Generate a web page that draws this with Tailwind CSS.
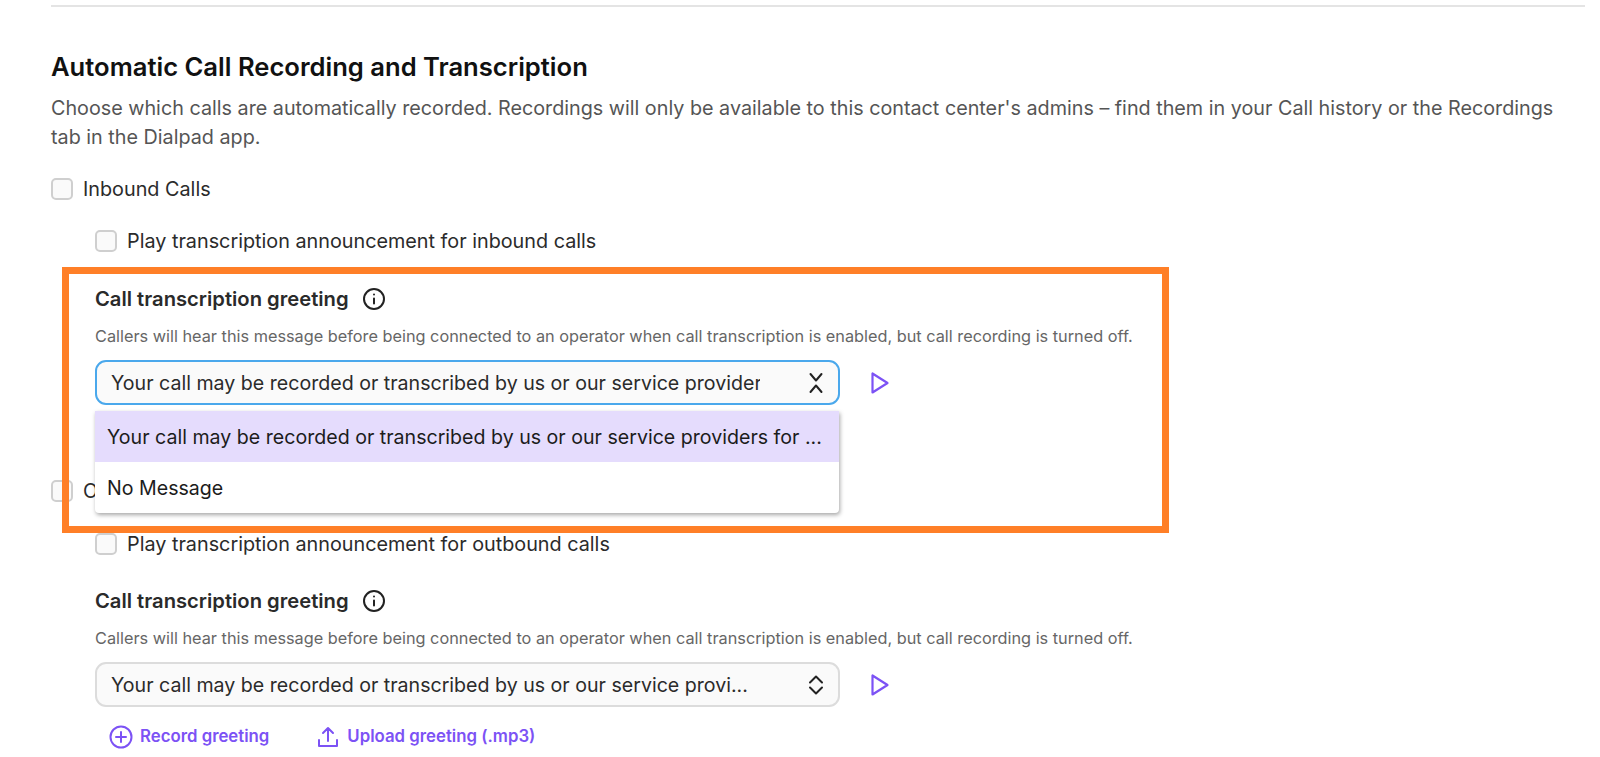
<!DOCTYPE html>
<html lang="en">
<head>
  <meta charset="UTF-8">
  <title>Automatic Call Recording and Transcription</title>
  <script src="https://cdn.jsdelivr.net/npm/@tailwindcss/browser@4"></script>
</head>
<body class="bg-white h-[757px] overflow-hidden font-['Inter',sans-serif] text-[#2b2b2b]">
  <div class="pt-[5px] pl-[51px] w-[1585px]">
    <div class="h-[2px] bg-[#e4e4e4]"></div>

    <h2 class="mt-[44px] text-[25.6px] leading-[32px] font-semibold text-[#111]">Automatic Call Recording and Transcription</h2>
    <p class="mt-[11px] text-[19.75px] leading-[29px] text-[#555] w-[1515px]">Choose which calls are automatically recorded. Recordings will only be available to this contact center's admins – find them in your Call history or the Recordings tab in the Dialpad app.</p>

    <!-- Inbound -->
    <div class="mt-[26px]">
      <label class="flex items-center gap-[10px] h-[22px] text-[19.8px]">
        <span class="w-[22px] h-[22px] rounded-[5px] border-2 border-[#cfcfcf] bg-[#fafafa]"></span>
        <span class="mt-[2px]">Inbound Calls</span>
      </label>
      <div class="ml-[44px] mt-[30px]">
        <label class="flex items-center gap-[10px] h-[22px] text-[19.8px]">
          <span class="w-[22px] h-[22px] rounded-[5px] border-2 border-[#cfcfcf] bg-[#fafafa]"></span>
          <span class="mt-[2px]">Play transcription announcement for inbound calls</span>
        </label>
        <div class="mt-[36px] flex items-center gap-[13px] h-[22px]">
          <span class="text-[20.2px] font-semibold text-[#2a2a2a]">Call transcription greeting</span>
          <svg class="w-[24px] h-[24px]" viewBox="0 0 24 24" fill="none" stroke="#222" stroke-width="2" stroke-linecap="round"><circle cx="12" cy="12" r="10"/><path d="M12 16.500v-5M12 7.500h.01"/></svg>
        </div>
        <p class="mt-[15px] text-[16.3px] leading-[22px] text-[#666]">Callers will hear this message before being connected to an operator when call transcription is enabled, but call recording is turned off.</p>
        <div class="mt-[13px] flex items-center">
          <div class="w-[745px] h-[45px] rounded-[11px] border-2 border-[#4aa8ec] bg-[#fafafa] flex items-center pl-[14px] pr-[10px] justify-between">
            <span class="w-[649px] pt-[2px] overflow-hidden whitespace-nowrap text-[19.6px]">Your call may be recorded or transcribed by us or our service providers for quality assurance</span>
            <svg class="w-[24px] h-[24px]" viewBox="0 0 24 24" fill="none" stroke="#222" stroke-width="2" stroke-linecap="round" stroke-linejoin="round"><path d="M6.500 3l5.500 6.500L17.500 3M6.500 21l5.500-6.500L17.500 21"/></svg>
          </div>
          <svg class="ml-[30px] w-[20px] h-[24px]" viewBox="0 0 20 24" fill="none" stroke="#7c52f5" stroke-width="2.200" stroke-linejoin="round"><path d="M2.500 2.500v19l15-9.500z"/></svg>
        </div>
        <div class="mt-[18px] ml-[14px] flex items-center h-[24px] text-[16.8px] font-semibold text-[#7c52f5]">
          <svg class="w-[24px] h-[24px]" viewBox="0 0 24 24" fill="none" stroke="#7c52f5" stroke-width="2" stroke-linecap="round"><circle cx="12" cy="12" r="10.500"/><path d="M12 7v10M7 12h10"/></svg>
          <span class="ml-[7px]">Record greeting</span>
          <svg class="ml-[47px] w-[24px] h-[24px]" viewBox="0 0 24 24" fill="none" stroke="#7c52f5" stroke-width="2" stroke-linecap="round" stroke-linejoin="round"><path d="M12 16V3M7 8l5-5 5 5M3 15v6h18v-6"/></svg>
          <span class="ml-[7px]">Upload greeting (.mp3)</span>
        </div>
      </div>
    </div>

    <!-- Outbound -->
    <div class="mt-[33px]">
      <label class="flex items-center gap-[10px] h-[22px] text-[19.8px]">
        <span class="w-[22px] h-[22px] rounded-[5px] border-2 border-[#cfcfcf] bg-[#fafafa]"></span>
        <span class="mt-[2px]">Outbound Calls</span>
      </label>
      <div class="ml-[44px] mt-[31px]">
        <label class="flex items-center gap-[10px] h-[22px] text-[19.8px]">
          <span class="w-[22px] h-[22px] rounded-[5px] border-2 border-[#cfcfcf] bg-[#fafafa]"></span>
          <span class="mt-[2px]">Play transcription announcement for outbound calls</span>
        </label>
        <div class="mt-[35px] flex items-center gap-[13px] h-[22px]">
          <span class="text-[20.2px] font-semibold text-[#2a2a2a]">Call transcription greeting</span>
          <svg class="w-[24px] h-[24px]" viewBox="0 0 24 24" fill="none" stroke="#222" stroke-width="2" stroke-linecap="round"><circle cx="12" cy="12" r="10"/><path d="M12 16.500v-5M12 7.500h.01"/></svg>
        </div>
        <p class="mt-[15px] text-[16.3px] leading-[22px] text-[#666]">Callers will hear this message before being connected to an operator when call transcription is enabled, but call recording is turned off.</p>
        <div class="mt-[13px] flex items-center">
          <div class="w-[745px] h-[45px] rounded-[11px] border-2 border-[#dcdcdc] bg-[#fafafa] flex items-center pl-[14px] pr-[10px] justify-between">
            <span class="pt-[2px] text-[19.6px] whitespace-nowrap">Your call may be recorded or transcribed by us or our service provi...</span>
            <svg class="w-[24px] h-[24px]" viewBox="0 0 24 24" fill="none" stroke="#222" stroke-width="2" stroke-linecap="round" stroke-linejoin="round"><path d="M6 9.500l6-6 6 6M6 14.500l6 6 6-6"/></svg>
          </div>
          <svg class="ml-[30px] w-[20px] h-[24px]" viewBox="0 0 20 24" fill="none" stroke="#7c52f5" stroke-width="2.200" stroke-linejoin="round"><path d="M2.500 2.500v19l15-9.500z"/></svg>
        </div>
        <div class="mt-[18px] ml-[14px] flex items-center h-[24px] text-[16.8px] font-semibold text-[#7c52f5]">
          <svg class="w-[24px] h-[24px]" viewBox="0 0 24 24" fill="none" stroke="#7c52f5" stroke-width="2" stroke-linecap="round"><circle cx="12" cy="12" r="10.500"/><path d="M12 7v10M7 12h10"/></svg>
          <span class="ml-[7px]">Record greeting</span>
          <svg class="ml-[47px] w-[24px] h-[24px]" viewBox="0 0 24 24" fill="none" stroke="#7c52f5" stroke-width="2" stroke-linecap="round" stroke-linejoin="round"><path d="M12 16V3M7 8l5-5 5 5M3 15v6h18v-6"/></svg>
          <span class="ml-[7px]">Upload greeting (.mp3)</span>
        </div>
      </div>
    </div>
  </div>

  <!-- Open dropdown, lies over the page -->
  <div class="absolute left-[95px] top-[411px] w-[744px] h-[102px] bg-white rounded-b-[4px] shadow-[1px_2px_4px_rgba(0,0,0,0.35)] text-[19.6px] text-[#1c1c1c]">
    <div class="h-[51px] bg-[#e5dcfd] flex items-center pl-[12px] pt-[2px] whitespace-nowrap">Your call may be recorded or transcribed by us or our service providers for ...</div>
    <div class="h-[51px] flex items-center pl-[12px] pt-[2px]">No Message</div>
  </div>

  <!-- Orange highlight box -->
  <div class="absolute left-[62px] top-[267px] w-[1107px] h-[266px] border-[7px] border-[#ff7f27] pointer-events-none"></div>
</body>
</html>
